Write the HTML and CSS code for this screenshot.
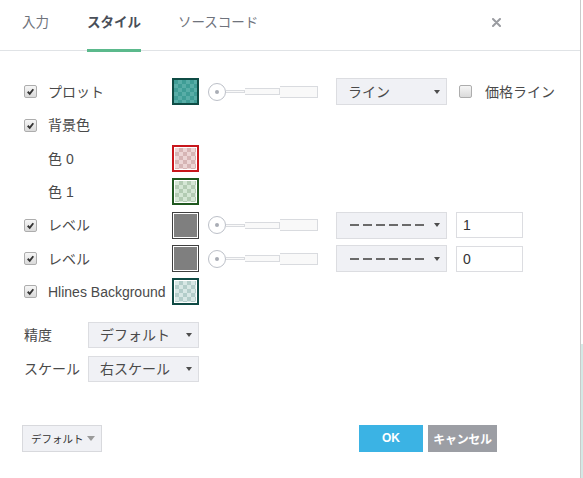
FILE: index.html
```html
<!DOCTYPE html>
<html lang="ja">
<head>
<meta charset="utf-8">
<title>スタイル</title>
<link rel="stylesheet" href="styles.css">
</head>
<body>
<div class="screen">
  <div class="dialog">
    <div class="tabs">
      <span class="tab t1"><span class="tx">入力</span></span>
      <span class="tab t2 active"><span class="tx">スタイル</span></span>
      <span class="tab t3"><span class="tx">ソースコード</span></span>
      <span class="close"><svg width="9" height="9" viewBox="0 0 9 9"><path d="M1 1L8 8M8 1L1 8" stroke="#9a9ca1" stroke-width="2" stroke-linecap="round"/></svg></span>
    </div>

    <div class="rows">
      <div class="row">
        <span class="cb on"><svg viewBox="0 0 13 13"><path d="M3.2 6.8L5.6 9.2L9.8 3.8" fill="none" stroke="#333" stroke-width="2.2"/></svg></span>
        <span class="label">プロット</span>
        <span class="swatch teal"><i></i></span>
        <span class="slider"><span class="knob"></span><span class="seg s1"></span><span class="seg s2"></span><span class="seg s3"></span></span>
        <span class="select"><span class="val">ライン</span><span class="caret"></span></span>
        <span class="cb after"></span>
        <span class="label2">価格ライン</span>
      </div>
      <div class="row">
        <span class="cb on"><svg viewBox="0 0 13 13"><path d="M3.2 6.8L5.6 9.2L9.8 3.8" fill="none" stroke="#333" stroke-width="2.2"/></svg></span>
        <span class="label">背景色</span>
      </div>
      <div class="row">
        <span class="label indent">色 0</span>
        <span class="swatch red"><i></i></span>
      </div>
      <div class="row">
        <span class="label indent">色 1</span>
        <span class="swatch green"><i></i></span>
      </div>
      <div class="row">
        <span class="cb on"><svg viewBox="0 0 13 13"><path d="M3.2 6.8L5.6 9.2L9.8 3.8" fill="none" stroke="#333" stroke-width="2.2"/></svg></span>
        <span class="label">レベル</span>
        <span class="swatch grey"><i></i></span>
        <span class="slider"><span class="knob"></span><span class="seg s1"></span><span class="seg s2"></span><span class="seg s3"></span></span>
        <span class="select"><span class="dashes"></span><span class="caret"></span></span>
        <span class="num">1</span>
      </div>
      <div class="row">
        <span class="cb on"><svg viewBox="0 0 13 13"><path d="M3.2 6.8L5.6 9.2L9.8 3.8" fill="none" stroke="#333" stroke-width="2.2"/></svg></span>
        <span class="label">レベル</span>
        <span class="swatch grey"><i></i></span>
        <span class="slider"><span class="knob"></span><span class="seg s1"></span><span class="seg s2"></span><span class="seg s3"></span></span>
        <span class="select"><span class="dashes"></span><span class="caret"></span></span>
        <span class="num">0</span>
      </div>
      <div class="row">
        <span class="cb on"><svg viewBox="0 0 13 13"><path d="M3.2 6.8L5.6 9.2L9.8 3.8" fill="none" stroke="#333" stroke-width="2.2"/></svg></span>
        <span class="label">Hlines Background</span>
        <span class="swatch hl"><i></i></span>
      </div>
    </div>

    <div class="settings">
      <div class="srow">
        <span class="slabel">精度</span>
        <span class="select small"><span class="val">デフォルト</span><span class="caret"></span></span>
      </div>
      <div class="srow">
        <span class="slabel">スケール</span>
        <span class="select small"><span class="val">右スケール</span><span class="caret"></span></span>
      </div>
    </div>

    <div class="footer">
      <span class="btn-default"><span class="bt">デフォルト</span><span class="caret light"></span></span>
      <span class="btn ok">OK</span>
      <span class="btn cancel">キャンセル</span>
    </div>
  </div>
  <div class="edge"></div>
</div>
</body>
</html>
```

FILE: styles.css
```css
* { box-sizing: border-box; }

body {
  margin: 0;
  background: #fff;
  font-family: "Liberation Sans", "Noto Sans CJK JP", sans-serif;
  font-size: 14px;
  color: #4a4a4a;
}

.screen {
  display: flex;
  width: 583px;
  height: 478px;
  overflow: hidden;
}

.dialog {
  width: 581px;
  height: 478px;
  border-right: 1px solid #cacaca;
  display: flex;
  flex-direction: column;
}

.edge {
  flex: 1;
  background: linear-gradient(#ffffff 0 72%, #d4e8e5 72%);
}

/* tabs */
.tabs {
  height: 51px;
  border-bottom: 1px solid #e0e3e6;
  display: flex;
  align-items: flex-start;
  padding: 0 79px 0 22px;
}

.tab {
  height: 35px;
  margin-top: 15px;
  font-size: 13.5px;
  line-height: 16px;
  color: #6f737c;
  white-space: nowrap;
  flex: none;
}

.t1 { width: 65px; }
.t2 { width: 91px; }

.tx {
  position: relative;
  display: inline-block;
  height: 35px;
}

.tab.active {
  font-weight: bold;
  color: #4a4f59;
}

.tab.active .tx::after {
  content: "";
  position: absolute;
  left: 0;
  right: 0;
  bottom: -2px;
  height: 3px;
  background: #5bb98c;
}

.close {
  margin-left: auto;
  margin-top: 18px;
  width: 9px;
  height: 9px;
  display: flex;
}

/* rows */
.rows {
  padding: 24.33px 0 0 24px;
  display: flex;
  flex-direction: column;
}

.row {
  height: 33.33px;
  display: flex;
  align-items: center;
}

.cb {
  width: 13px;
  height: 13px;
  margin-right: 11px;
  border: 1px solid #adadad;
  border-radius: 2px;
  background: linear-gradient(#f6f6f6, #dadada);
  display: flex;
  flex: none;
}

.cb svg { width: 11px; height: 11px; }

.cb.after { margin-left: 12px; margin-right: 13px; }

.label {
  width: 124px;
  line-height: 18px;
  white-space: nowrap;
  flex: none;
}

.label.indent { margin-left: 24px; }

.label2 { line-height: 18px; white-space: nowrap; }

.swatch {
  width: 27px;
  height: 27px;
  margin-right: 9px;
  border: 2px solid #333;
  padding: 1px;
  background: #fff;
  display: flex;
  flex: none;
}

.swatch i {
  flex: 1;
  background-color: var(--a);
  background-image:
    linear-gradient(45deg, var(--b) 25%, transparent 25%, transparent 75%, var(--b) 75%),
    linear-gradient(45deg, var(--b) 25%, transparent 25%, transparent 75%, var(--b) 75%);
  background-size: 8px 8px;
  background-position: 0 0, 4px 4px;
}

.swatch.teal { border-color: #0f4c45; padding: 0; }
.swatch.teal i { --a: #3f9d96; --b: #58ada7; }
.swatch.red { border-color: #c8161c; }
.swatch.red i { --a: #ecd5d5; --b: #d6b5b5; }
.swatch.green { border-color: #1f581f; }
.swatch.green i { --a: #d4e6d4; --b: #b3cbb3; }
.swatch.hl { border-color: #0f4a44; }
.swatch.hl i { --a: #d7e7e5; --b: #b3cdca; }
.swatch.grey { border: 1.5px solid #3f3f3f; }
.swatch.grey i { background: #7f7f7f; }

/* slider */
.slider {
  width: 110px;
  margin-right: 18px;
  display: flex;
  align-items: center;
  flex: none;
}

.knob {
  width: 18px;
  height: 18px;
  border: 1px solid #bcc0c8;
  border-radius: 50%;
  background: #fff;
  display: flex;
  align-items: center;
  justify-content: center;
  flex: none;
}

.knob::before {
  content: "";
  width: 4px;
  height: 4px;
  border-radius: 50%;
  background: #a9adb5;
}

.seg {
  border: 1px solid #d9dbdf;
  border-left: none;
  background: #f9f9f9;
  flex: none;
}

.s1 { width: 19px; height: 3px; }
.s2 { width: 35px; height: 7px; }
.s3 { width: 38px; height: 12px; }

/* select */
.select {
  width: 111px;
  height: 27px;
  border: 1px solid #dcdde1;
  background: #f0f1f5;
  display: flex;
  align-items: center;
  padding: 0 6px 0 11px;
  flex: none;
}

.select .val {
  flex: 1;
  line-height: 18px;
  white-space: nowrap;
  color: #4a4a4a;
}

.caret {
  width: 0;
  height: 0;
  border-left: 3.5px solid transparent;
  border-right: 3.5px solid transparent;
  border-top: 4px solid #4d4d4d;
  flex: none;
  margin-left: auto;
}

.dashes {
  width: 74px;
  height: 2px;
  margin-left: 2px;
  background: repeating-linear-gradient(90deg, #6a6a6a 0 9px, transparent 9px 13px);
  flex: none;
}

.num {
  width: 67px;
  height: 26px;
  margin-left: 9px;
  border: 1px solid #dcdde1;
  background: #fff;
  padding-left: 6px;
  line-height: 24px;
  color: #333;
  flex: none;
}

/* settings */
.settings {
  margin-top: 13.33px;
  padding-left: 24px;
  display: flex;
  flex-direction: column;
  gap: 8px;
}

.srow {
  height: 26px;
  display: flex;
  align-items: center;
}

.slabel {
  width: 64px;
  line-height: 18px;
  white-space: nowrap;
  flex: none;
}

.select.small { height: 26px; }

/* footer */
.footer {
  margin-top: 43px;
  padding: 0 83px 0 22px;
  display: flex;
  align-items: center;
}

.btn-default {
  width: 80px;
  height: 27px;
  border: 1px solid #d8d9dd;
  background: #f0f1f5;
  display: flex;
  align-items: center;
  padding: 0 6px 0 8px;
  font-size: 10.5px;
  color: #333;
  flex: none;
}

.bt { white-space: nowrap; }

.caret.light {
  border-left-width: 4px;
  border-right-width: 4px;
  border-top: 5px solid #9a9a9a;
}

.btn {
  height: 27px;
  display: flex;
  align-items: center;
  justify-content: center;
  color: #fff;
  font-weight: bold;
  font-size: 12px;
  white-space: nowrap;
  flex: none;
}

.ok {
  width: 64px;
  margin-left: auto;
  background: #3bb3e4;
}

.cancel {
  width: 69px;
  margin-left: 5px;
  background: #9c9ea4;
  letter-spacing: -0.3px;
}
```
